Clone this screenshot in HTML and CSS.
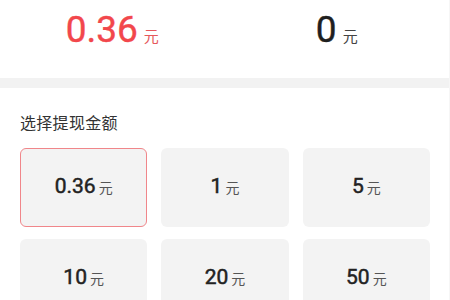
FILE: index.html
```html
<!DOCTYPE html>
<html lang="zh">
<head>
<meta charset="utf-8">
<link rel="stylesheet" href="styles.css">
</head>
<body>
<div class="page">
  <div class="summary">
    <div class="stat stat-red"><span class="num">0.36</span><span class="unit">元</span></div>
    <div class="stat stat-dark"><span class="num">0</span><span class="unit">元</span></div>
  </div>
  <div class="band"></div>
  <div class="choose">
    <div class="label">选择提现金额</div>
    <div class="grid">
      <div class="card card-active"><span class="amt">0.36</span><span class="cu">元</span></div>
      <div class="card"><span class="amt">1</span><span class="cu">元</span></div>
      <div class="card"><span class="amt">5</span><span class="cu">元</span></div>
      <div class="card"><span class="amt">10</span><span class="cu">元</span></div>
      <div class="card"><span class="amt">20</span><span class="cu">元</span></div>
      <div class="card"><span class="amt">50</span><span class="cu">元</span></div>
    </div>
  </div>
</div>
</body>
</html>
```
FILE: styles.css
```css
html, body {
  margin: 0;
  padding: 0;
  background: #ffffff;
}
body {
  font-family: Roboto, "Noto Sans CJK SC", sans-serif;
  color: #222222;
}
.page {
  width: 449px;
  height: 300px;
  overflow: hidden;
  border-right: 1px solid #f6f6f6;
}
.summary {
  height: 78px;
  box-sizing: border-box;
  padding-top: 8px;
  display: grid;
  grid-template-columns: 1fr 1fr;
}
.stat {
  display: flex;
  justify-content: center;
  align-items: baseline;
  line-height: 44px;
}
.stat .num {
  font-size: 37px;
  font-family: Roboto, sans-serif;
  -webkit-text-stroke: 0.4px currentColor;
}
.stat .unit {
  font-size: 15px;
  margin-left: 6px;
  font-family: "Noto Sans CJK SC", sans-serif;
}
.stat-red .num { color: #f2474c; }
.stat-red .unit { color: #e6585c; }
.stat-dark .num { color: #1f1f1f; }
.stat-dark .unit { color: #444444; }
.band {
  height: 10px;
  background: #f2f2f2;
}
.choose {
  padding: 23px 19px 0 20px;
}
.label {
  font-family: "Noto Sans CJK SC", sans-serif;
  font-size: 16px;
  line-height: 22px;
  color: #333333;
  letter-spacing: 0.3px;
}
.grid {
  margin-top: 15px;
  display: grid;
  grid-template-columns: repeat(3, 1fr);
  column-gap: 14px;
  row-gap: 12px;
}
.card {
  height: 79px;
  box-sizing: border-box;
  background: #f3f3f3;
  border-radius: 6px;
  display: flex;
  justify-content: center;
  align-items: baseline;
  padding-top: 24px;
  line-height: 28px;
}
.card-active {
  border: 1px solid #f0868a;
  padding-top: 23px;
}
.card .amt {
  font-family: Roboto, sans-serif;
  font-weight: 400;
  -webkit-text-stroke: 0.5px currentColor;
  font-size: 21px;
  color: #222222;
}
.card .cu {
  font-family: "Noto Sans CJK SC", sans-serif;
  font-size: 14px;
  color: #555555;
  margin-left: 3px;
}
```
